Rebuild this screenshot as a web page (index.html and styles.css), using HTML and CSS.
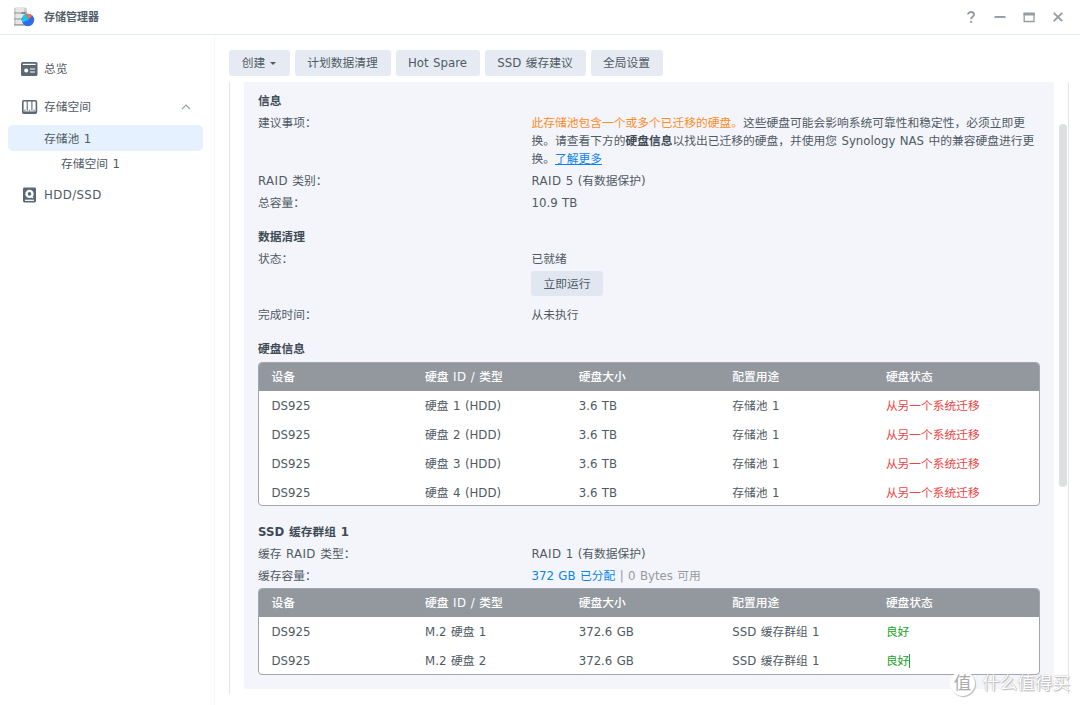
FILE: index.html
```html
<!DOCTYPE html>
<html lang="zh-CN">
<head>
    <meta charset="UTF-8">
    <meta name="viewport" content="width=device-width, initial-scale=1.0">
    <title>存储管理器</title>
    <link rel="stylesheet" href="styles.css">
</head>
<body>
    <header class="titlebar">
        <svg class="app-icon" width="22" height="20" viewBox="0 0 22 20">
            <rect x="1" y="0.5" width="13" height="18" rx="2" fill="#cfcfcf"/>
            <rect x="3" y="0.5" width="8" height="18" fill="#e6e6e6"/>
            <path d="M1 6h13M1 12h13M1 17.8h13" stroke="#929292" stroke-width="1.2"/>
            <path d="M8.5 6h4M8.5 12h4" stroke="#555" stroke-width="1.2"/>
            <circle cx="15" cy="13" r="6.2" fill="#2f6bea"/>
            <path d="M15 13 9.4 15.5A6.2 6.2 0 0 1 14 6.9Z" fill="#14c8ee"/>
            <path d="M15 13 14 6.8A6.2 6.2 0 0 1 19.2 8.4Z" fill="#ff7136"/>
        </svg>
        <span class="app-title">存储管理器</span>
        <div class="window-controls">
            <svg width="14" height="14" viewBox="0 0 14 14"><path d="M4 4.6C4 1.2 10 1.2 10 4.6C10 6.8 7.1 6.7 7.1 9.3" /><path d="M7.1 10.9v2"/></svg>
            <svg width="14" height="14" viewBox="0 0 14 14"><path d="M1.5 7h11"/></svg>
            <svg width="14" height="14" viewBox="0 0 14 14"><path class="thin" d="M2.2 3v8.5h9.8V3"/><path class="thick" d="M1.5 4h11.2"/></svg>
            <svg width="14" height="14" viewBox="0 0 14 14"><path d="m2.8 2.8 8.4 8.4M11.2 2.8l-8.4 8.4"/></svg>
        </div>
    </header>

    <div class="layout">
        <nav class="sidebar">
            <a class="nav-item nav-overview">
                <svg width="17" height="14" viewBox="0 0 17 14">
                    <rect width="16.5" height="14" rx="1.6" fill="#5c6974"/>
                    <path d="M1.8 2.4h12.8" stroke="#fff" stroke-width="1.2"/>
                    <circle cx="5.2" cy="8.4" r="2" fill="#fff"/>
                    <path d="M9 7h5M9 10h5" stroke="#fff" stroke-width="1.2"/>
                </svg>
                <span>总览</span>
            </a>
            <a class="nav-item nav-storage">
                <svg width="17" height="14" viewBox="0 0 17 14">
                    <rect x="1.8" y="0.8" width="13.6" height="12.4" rx="1" fill="#fff" stroke="#5c6974" stroke-width="1.6"/>
                    <path d="M6.2 1v9.6M10.9 1v9.6" stroke="#5c6974" stroke-width="1.1"/>
                    <path d="M2 12.2h13" stroke="#5c6974" stroke-width="1.6"/>
                    <path d="M3.2 10.2h1.4M7.8 10.2h1.4M12.4 10.2h1.4" stroke="#5c6974"/>
                </svg>
                <span>存储空间</span>
                <svg class="chevron" width="10" height="6" viewBox="0 0 10 6"><path d="m1 5 4-4 4 4" fill="none" stroke="#98a0a6" stroke-width="1.1"/></svg>
            </a>
            <a class="nav-item nav-sub active">存储池 1</a>
            <a class="nav-item nav-leaf">存储空间 1</a>
            <a class="nav-item nav-hdd">
                <svg width="17" height="16" viewBox="0 0 17 16">
                    <rect x="2" y="0.5" width="13" height="15" rx="1.4" fill="#5c6974"/>
                    <circle cx="8.5" cy="6.9" r="4.2" fill="#fff"/>
                    <circle cx="8.5" cy="6.9" r="1.8" fill="#5c6974"/>
                    <path d="m10.2 9.2 1.8 1.6" stroke="#fff" stroke-width="1.4"/>
                    <path d="M4 13.3h9" stroke="#fff" stroke-width="1.2"/>
                </svg>
                <span class="caps">HDD/SSD</span>
            </a>
        </nav>

        <main class="main">
            <div class="toolbar">
                <button class="btn btn-create">创建<span class="caret"></span></button>
                <button class="btn btn-scrub">计划数据清理</button>
                <button class="btn btn-spare">Hot Spare</button>
                <button class="btn btn-cache">SSD 缓存建议</button>
                <button class="btn btn-global">全局设置</button>
            </div>

            <div class="panel">
                <div class="card">
                    <section class="section">
                        <h2>信息</h2>
                        <div class="field">
                            <span class="label">建议事项：</span>
                            <p class="value"><span class="warn">此存储池包含一个或多个已迁移的硬盘。</span>这些硬盘可能会影响系统可靠性和稳定性，必须立即更<br>换。请查看下方的<b>硬盘信息</b>以找出已迁移的硬盘，并使用您 Synology NAS 中的兼容硬盘进行更<br>换。<a class="link">了解更多</a></p>
                        </div>
                        <div class="field"><span class="label"><span class="caps">RAID</span> 类别：</span><span class="value"><span class="caps">RAID</span> 5 (有数据保护)</span></div>
                        <div class="field"><span class="label">总容量：</span><span class="value">10.9 TB</span></div>
                    </section>

                    <section class="section">
                        <h2>数据清理</h2>
                        <div class="field"><span class="label">状态：</span><span class="value">已就绪</span></div>
                        <button class="btn btn-run">立即运行</button>
                        <div class="field"><span class="label">完成时间：</span><span class="value">从未执行</span></div>
                    </section>

                    <section class="section">
                        <h2>硬盘信息</h2>
                        <div class="table-wrap drives">
                            <table>
                                <thead>
                                    <tr><th>设备</th><th>硬盘 <span class="caps">ID</span> / 类型</th><th>硬盘大小</th><th>配置用途</th><th>硬盘状态</th></tr>
                                </thead>
                                <tbody>
                                    <tr><td>DS925</td><td>硬盘 1 (HDD)</td><td>3.6 TB</td><td>存储池 1</td><td class="bad">从另一个系统迁移</td></tr>
                                    <tr><td>DS925</td><td>硬盘 2 (HDD)</td><td>3.6 TB</td><td>存储池 1</td><td class="bad">从另一个系统迁移</td></tr>
                                    <tr><td>DS925</td><td>硬盘 3 (HDD)</td><td>3.6 TB</td><td>存储池 1</td><td class="bad">从另一个系统迁移</td></tr>
                                    <tr><td>DS925</td><td>硬盘 4 (HDD)</td><td>3.6 TB</td><td>存储池 1</td><td class="bad">从另一个系统迁移</td></tr>
                                </tbody>
                            </table>
                        </div>
                    </section>

                    <section class="section section-cache">
                        <h2>SSD 缓存群组 1</h2>
                        <div class="field"><span class="label">缓存 <span class="caps">RAID</span> 类型：</span><span class="value"><span class="caps">RAID</span> 1 (有数据保护)</span></div>
                        <div class="field"><span class="label">缓存容量：</span><span class="value muted"><span class="used">372 GB 已分配</span> | 0 Bytes 可用</span></div>
                        <div class="table-wrap cache">
                            <table>
                                <thead>
                                    <tr><th>设备</th><th>硬盘 <span class="caps">ID</span> / 类型</th><th>硬盘大小</th><th>配置用途</th><th>硬盘状态</th></tr>
                                </thead>
                                <tbody>
                                    <tr><td>DS925</td><td>M.2 硬盘 1</td><td>372.6 GB</td><td>SSD 缓存群组 1</td><td class="good">良好</td></tr>
                                    <tr><td>DS925</td><td>M.2 硬盘 2</td><td>372.6 GB</td><td>SSD 缓存群组 1</td><td class="good"><span class="cursor">良好</span></td></tr>
                                </tbody>
                            </table>
                        </div>
                    </section>
                </div>
                <div class="scrollbar"></div>
            </div>
        </main>
    </div>

    <div class="watermark"><span class="watermark-logo">值</span><span>什么值得买</span></div>
</body>
</html>
```
FILE: styles.css
```css
* {
    box-sizing: border-box;
}
body {
    margin: 0;
    height: 705px;
    overflow: hidden;
    background: #fff;
    color: #505a64;
    font-family: "DejaVu Sans", "Noto Sans CJK SC", sans-serif;
    font-size: 11.75px;
    line-height: 18px;
    white-space: nowrap;
    word-spacing: 0.7px;
}
.caps {
    letter-spacing: 0.4px;
}
.titlebar {
    display: flex;
    align-items: center;
    height: 35px;
    padding: 0 15px 0 13px;
    border-bottom: 1px solid #e0e8f0;
}
.app-title {
    margin-left: 9px;
    padding-top: 2px;
    font-size: 11px;
    font-weight: bold;
    color: #535e68;
}
.window-controls {
    display: flex;
    gap: 15px;
    margin-left: auto;
}
.window-controls path {
    fill: none;
    stroke: #959ca2;
    stroke-width: 1.9;
}
.window-controls .thin {
    stroke-width: 1.3;
}
.window-controls .thick {
    stroke-width: 3;
}
.layout {
    display: flex;
    height: 670px;
}
.sidebar {
    display: flex;
    flex-direction: column;
    width: 215px;
    padding: 21px 11px 0 8px;
    border-right: 1px solid #f7f8fa;
}
.nav-item {
    display: flex;
    align-items: center;
    padding-left: 13px;
    border-radius: 5px;
}
.nav-item span {
    margin-left: 6px;
}
.nav-overview {
    height: 26px;
}
.nav-storage {
    height: 26px;
    margin-top: 12px;
}
.chevron {
    margin: 0 12px 0 auto;
}
.nav-sub {
    height: 26px;
    margin-top: 5px;
    padding-top: 1px;
    padding-left: 36px;
}
.nav-leaf {
    height: 25px;
    padding-left: 53px;
}
.nav-hdd {
    height: 26px;
    margin-top: 6px;
}
.active {
    background: #e5f1fe;
}
.main {
    flex: 1;
    padding: 15px 11px 0 14px;
}
.toolbar {
    display: flex;
    gap: 5px;
}
.btn {
    display: flex;
    align-items: center;
    justify-content: center;
    height: 26px;
    padding: 0 1px 0 0;
    border: none;
    border-radius: 3px;
    background: #e6ebf3;
    color: #505a64;
    font: inherit;
    word-spacing: inherit;
}
.btn-create {
    width: 61px;
}
.btn-scrub {
    width: 96px;
}
.btn-spare {
    width: 84px;
}
.btn-cache {
    width: 101px;
}
.btn-global {
    width: 72px;
}
.caret {
    margin-left: 5px;
    border: 3px solid transparent;
    border-top-color: #505a64;
    border-bottom: none;
}
.panel {
    display: flex;
    height: 612px;
    margin-top: 6px;
    padding-left: 14px;
    border: 1px solid #dfe6f0;
    border-width: 0 1px;
}
.card {
    width: 810px;
    height: 607px;
    padding: 8px 14px 0;
    border-radius: 0 0 3px 3px;
    background: #f4f5fa;
}
.scrollbar {
    width: 8px;
    height: 363px;
    margin: 42px 0 0 5px;
    border-radius: 4px;
    background: #dedfe0;
}
.section {
    margin-bottom: 12px;
}
.section h2 {
    margin: 0;
    font-size: 11.75px;
    line-height: 22px;
    color: #414b55;
}
.field {
    display: flex;
    padding: 2px 0;
}
.label {
    width: 273.5px;
}
.value {
    margin: 0;
}
.value b {
    color: #414b55;
}
.warn {
    color: #fb8c28;
}
.link {
    color: #0a84ed;
    text-decoration: underline;
}
.used {
    color: #0a84ed;
}
.muted {
    color: #96999e;
}
.btn-run {
    width: 72px;
    height: 25px;
    margin: 1px 0 8px 273px;
    padding: 0;
    background: #e0e7f0;
}
.table-wrap {
    width: 782px;
    margin-top: 1px;
    border: 1px solid #a2a7ad;
    border-radius: 4px;
    overflow: hidden;
    background: #fff;
}
.drives {
    height: 144px;
    margin-top: 2px;
}
.cache {
    height: 87px;
}
.section-cache {
    margin-top: 15px;
}
table {
    width: 780px;
    table-layout: fixed;
    border-collapse: collapse;
}
th, td {
    width: 153.6px;
    height: 29px;
    padding: 0 0 0 12.5px;
    text-align: left;
}
th {
    height: 28px;
    background: #93989f;
    color: #fff;
    font-weight: 500;
}
th:last-child {
    width: auto;
}
.bad {
    color: #ee4444;
}
.good {
    color: #16a51f;
}
.cursor {
    border-right: 1px solid #16a51f;
}
/* site mark lying over the bottom right corner */
.watermark {
    position: absolute;
    left: 950px;
    top: 670px;
    display: flex;
    align-items: center;
    gap: 7px;
    color: #fff;
    font-size: 17.6px;
    line-height: 26px;
    text-shadow: 0 0 1px #999, 1px 1px 1px #bbb;
}
.watermark-logo {
    width: 25px;
    height: 25px;
    border-radius: 50%;
    background: #fff;
    box-shadow: 1px 1px 1px #bbb;
    color: #aaa;
    line-height: 24px;
    text-align: center;
    text-shadow: none;
}
```
